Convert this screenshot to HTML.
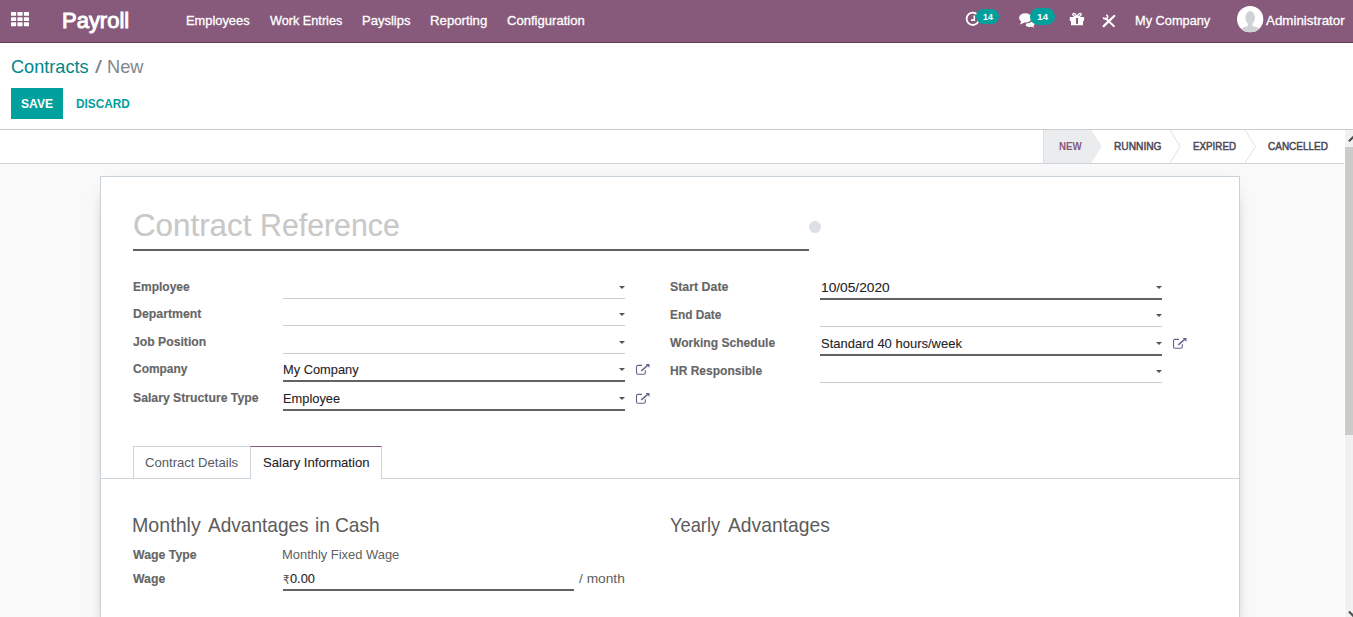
<!DOCTYPE html>
<html lang="en">
<head>
<meta charset="utf-8">
<title>Odoo - Contracts / New</title>
<style>
html,body{margin:0;padding:0;}
body{width:1353px;height:617px;overflow:hidden;position:relative;background:#f9f9f9;
font-family:"Liberation Sans",sans-serif;-webkit-font-smoothing:antialiased;}
.t{position:absolute;white-space:pre;transform-origin:0 0;display:block;}
.r{position:absolute;}
svg{position:absolute;overflow:visible;}
nav,header,main,section,.w{display:block;margin:0;padding:0;}
</style>
</head>
<body>
<nav class="o_main_navbar">
<div class="r" style="left:0px;top:0px;width:1353px;height:42px;background:#875A7B;"></div>
<div class="r" style="left:0px;top:42px;width:1353px;height:1px;background:#5f3f56;"></div>
<svg style="left:11px;top:12px" width="18" height="14" viewBox="0 0 18 14" fill="#fff"><rect x="0.00" y="0.00" width="5.14" height="3.86" rx="0.6"/><rect x="6.43" y="0.00" width="5.14" height="3.86" rx="0.6"/><rect x="12.86" y="0.00" width="5.14" height="3.86" rx="0.6"/><rect x="0.00" y="5.14" width="5.14" height="3.86" rx="0.6"/><rect x="6.43" y="5.14" width="5.14" height="3.86" rx="0.6"/><rect x="12.86" y="5.14" width="5.14" height="3.86" rx="0.6"/><rect x="0.00" y="10.28" width="5.14" height="3.86" rx="0.6"/><rect x="6.43" y="10.28" width="5.14" height="3.86" rx="0.6"/><rect x="12.86" y="10.28" width="5.14" height="3.86" rx="0.6"/></svg>
<span class="t" style="left:62px;top:5px;font-size:22.70px;line-height:30px;font-weight:400;color:#fff;transform:scaleX(0.9687);-webkit-text-stroke:1px #fff;">Payroll</span>
<span class="t" style="left:186px;top:12px;font-size:13.40px;line-height:17px;font-weight:400;color:#fff;transform:scaleX(0.9594);-webkit-text-stroke:0.3px #fff;">Employees</span>
<span class="t" style="left:270px;top:12px;font-size:13.40px;line-height:17px;font-weight:400;color:#fff;transform:scaleX(0.9467);-webkit-text-stroke:0.3px #fff;">Work Entries</span>
<span class="t" style="left:362px;top:12px;font-size:13.40px;line-height:17px;font-weight:400;color:#fff;transform:scaleX(0.9707);-webkit-text-stroke:0.3px #fff;">Payslips</span>
<span class="t" style="left:430px;top:12px;font-size:13.40px;line-height:17px;font-weight:400;color:#fff;transform:scaleX(0.9868);-webkit-text-stroke:0.3px #fff;">Reporting</span>
<span class="t" style="left:507px;top:12px;font-size:13.40px;line-height:17px;font-weight:400;color:#fff;transform:scaleX(0.9761);-webkit-text-stroke:0.3px #fff;">Configuration</span>
<span class="t" style="left:1135px;top:12px;font-size:13.40px;line-height:17px;font-weight:400;color:#fff;transform:scaleX(0.9541);-webkit-text-stroke:0.3px #fff;">My Company</span>
<span class="t" style="left:1266px;top:12px;font-size:13.40px;line-height:17px;font-weight:400;color:#fff;transform:scaleX(0.9971);-webkit-text-stroke:0.3px #fff;">Administrator</span>
<svg style="left:965px;top:11px" width="16" height="16" viewBox="965 11 16 16"><circle cx="972.8" cy="18.8" r="6.2" fill="none" stroke="#fff" stroke-width="1.9"/><path d="M974.3 15.4v4.7H971" fill="none" stroke="#fff" stroke-width="1.6"/></svg>
<div class="r" style="left:975.9px;top:8.8px;width:23.1px;height:15.3px;background:#00A09D;border-radius:7.7px"></div>
<span class="t" style="left:983px;top:10px;font-size:9.80px;line-height:13px;font-weight:700;color:#fff;transform:scaleX(0.9009);">14</span>
<svg style="left:1018px;top:12px" width="18" height="15" viewBox="1018 12 18 15" fill="#fff"><ellipse cx="1025.3" cy="17.9" rx="6.2" ry="4.7"/><path d="M1021.6 20.6L1020 24.4L1024.6 22.4z"/><path d="M1026.2 23.4c2.6 0 5-.9 6.300-2.500c1.400.8 2.100 1.800 2.100 2.900c0 .9-.5 1.700-1.300 2.300l1 1.300l-3.200-.6c-2.300.3-4.200-.2-5.300-1.400z"/></svg>
<div class="r" style="left:1030.2px;top:8.1px;width:24.9px;height:17px;background:#00A09D;border-radius:8.5px"></div>
<span class="t" style="left:1037px;top:10px;font-size:9.80px;line-height:13px;font-weight:700;color:#fff;transform:scaleX(1.0204);">14</span>
<svg style="left:1069px;top:12px" width="16" height="14" viewBox="1069 12 16 14" fill="#fff"><rect x="1069.8" y="16.9" width="14.3" height="4.1" rx="0.5"/><rect x="1071" y="20.5" width="12" height="4.7" rx="0.5"/><rect x="1076" y="17.3" width="2" height="6.6" fill="#875A7B"/><path d="M1077 17.2c-1.200-2.800-2.600-4.300-3.700-3.700c-1.100.6-.3 3.300 3.700 3.700zM1077 17.2c1.200-2.800 2.600-4.300 3.700-3.700c1.100.6.3 3.300-3.700 3.700z" fill="none" stroke="#fff" stroke-width="1.3"/></svg>
<svg style="left:1102px;top:14px" width="14" height="14" viewBox="1102 14 14 14" fill="none" stroke="#fff"><path d="M1103.7 26.1L1114.2 16" stroke-width="2.3" stroke-linecap="round"/><path d="M1105.6 18.2L1113.9 26.100" stroke-width="2" stroke-linecap="round"/><path d="M1103.300 17.200A2.200 2.200 0 1 0 1106.100 14.900" stroke-width="1.500"/></svg>
<svg style="left:1236.8px;top:5.9px" width="26.3" height="26.3" viewBox="0 0 26 26"><defs><clipPath id="av"><circle cx="13" cy="13" r="13"/></clipPath></defs><circle cx="13" cy="13" r="13" fill="#fff"/><g clip-path="url(#av)" fill="#d0d3d6"><ellipse cx="13" cy="11.5" rx="4.8" ry="6.6"/><path d="M10.6 16h4.8v4h-4.8z"/><path d="M2 27c0-5 5-6.6 11-7.4 6 .8 11 2.400 11 7.400z"/></g></svg>
</nav>
<header class="o_control_panel">
<div class="r" style="left:0px;top:43px;width:1353px;height:86px;background:#fff;"></div>
<div class="r" style="left:0px;top:129px;width:1353px;height:1px;background:#cccccc;"></div>
<span class="t" style="left:11px;top:55px;font-size:18.60px;line-height:24px;font-weight:400;color:#00878A;transform:scaleX(0.9751);">Contracts</span>
<span class="t" style="left:95px;top:55px;font-size:18.60px;line-height:24px;font-weight:400;color:#7a828a;transform:scaleX(1.3441);">/</span>
<span class="t" style="left:107px;top:55px;font-size:18.60px;line-height:24px;font-weight:400;color:#7f868c;transform:scaleX(0.9801);">New</span>
<div class="r" style="left:11px;top:88px;width:52px;height:31px;background:#00A09D;"></div>
<span class="t" style="left:21px;top:95px;font-size:13.00px;line-height:17px;font-weight:700;color:#fff;transform:scaleX(0.9296);">SAVE</span>
<span class="t" style="left:76px;top:95px;font-size:13.00px;line-height:17px;font-weight:700;color:#00A09D;transform:scaleX(0.9081);">DISCARD</span>
</header>
<div class="o_form_statusbar">
<div class="r" style="left:0px;top:130px;width:1345px;height:33px;background:#fff;"></div>
<div class="r" style="left:0px;top:163px;width:1344px;height:1px;background:#ced4da;"></div>
<svg style="left:1043px;top:130px" width="302" height="33" viewBox="0 0 302 33"><polygon points="0,0 48.3,0 58.8,16.500 48.3,33 0,33" fill="#eaecee"/><rect x="0" y="0" width="1" height="33" fill="#dcdfe2"/><polyline points="127,0 137,16.5 127,33" fill="none" stroke="#dee2e6" stroke-width="1"/><polyline points="202,0 212.5,16.5 202,33" fill="none" stroke="#dee2e6" stroke-width="1"/></svg>
<span class="t" style="left:1059px;top:139px;font-size:11.50px;line-height:15px;font-weight:700;color:#875A7B;transform:scaleX(0.8500);">NEW</span>
<span class="t" style="left:1114px;top:139px;font-size:11.50px;line-height:15px;font-weight:400;color:#4c4753;transform:scaleX(0.8854);-webkit-text-stroke:0.5px #4c4753;">RUNNING</span>
<span class="t" style="left:1193px;top:139px;font-size:11.50px;line-height:15px;font-weight:400;color:#4c4753;transform:scaleX(0.8517);-webkit-text-stroke:0.5px #4c4753;">EXPIRED</span>
<span class="t" style="left:1268px;top:139px;font-size:11.50px;line-height:15px;font-weight:400;color:#4c4753;transform:scaleX(0.8692);-webkit-text-stroke:0.5px #4c4753;">CANCELLED</span>
</div>
<div class="scrollbar">
<div class="r" style="left:1345px;top:130px;width:8px;height:487px;background:#f1f1f1;"></div>
<div class="r" style="left:1345px;top:147px;width:8px;height:288px;background:#cbcbc9;"></div>
<svg style="left:1345px;top:130px" width="8" height="17" viewBox="1345 130 8 17"><path d="M1348.9 141.300L1354 136.200" stroke="#505050" stroke-width="2.200" fill="none"/></svg>
<svg style="left:1345px;top:600px" width="8" height="17" viewBox="1345 600 8 17"><path d="M1348.9 611.500L1354 616.600" stroke="#505050" stroke-width="2.200" fill="none"/></svg>
<div class="r" style="left:1344px;top:163px;width:1px;height:454px;background:#fff;"></div>
</div>
<main class="o_form_sheet">
<div class="r" style="left:100px;top:176px;width:1138px;height:460px;background:#fff;border:1px solid #c9d1d9;box-shadow:0 5px 20px -15px #000"></div>
<div class="w"><span class="t" style="left:133px;top:205px;font-size:30.50px;line-height:40px;font-weight:400;color:#c8c8c8;transform:scaleX(1.0268);-webkit-text-stroke:0.15px #c8c8c8;">Contract </span><span class="t" style="left:260px;top:205px;font-size:30.50px;line-height:40px;font-weight:400;color:#c8c8c8;transform:scaleX(0.9936);-webkit-text-stroke:0.15px #c8c8c8;">Reference</span></div>
<div class="r" style="left:133px;top:249px;width:676px;height:2px;background:#606060;"></div>
<div class="r" style="left:809.3px;top:221.3px;width:11.6px;height:11.6px;border-radius:50%;background:#dcdfe3"></div>
<span class="t" style="left:133px;top:278px;font-size:13.40px;line-height:17px;font-weight:700;color:#666666;transform:scaleX(0.8951);-webkit-text-stroke:0.15px #666;">Employee</span>
<div class="r" style="left:283px;top:298px;width:342px;height:1px;background:#cccccc;"></div>
<svg style="left:619.2px;top:286.3px" width="6" height="3" viewBox="0 0 6 3"><path d="M0 0h6L3 3z" fill="#555"/></svg>
<span class="t" style="left:133px;top:305px;font-size:13.40px;line-height:17px;font-weight:700;color:#666666;transform:scaleX(0.9202);-webkit-text-stroke:0.15px #666;">Department</span>
<div class="r" style="left:283px;top:325px;width:342px;height:1px;background:#cccccc;"></div>
<svg style="left:619.2px;top:313.2px" width="6" height="3" viewBox="0 0 6 3"><path d="M0 0h6L3 3z" fill="#555"/></svg>
<span class="t" style="left:133px;top:333px;font-size:13.40px;line-height:17px;font-weight:700;color:#666666;transform:scaleX(0.9114);-webkit-text-stroke:0.15px #666;">Job Position</span>
<div class="r" style="left:283px;top:353px;width:342px;height:1px;background:#cccccc;"></div>
<svg style="left:619.2px;top:341.3px" width="6" height="3" viewBox="0 0 6 3"><path d="M0 0h6L3 3z" fill="#555"/></svg>
<span class="t" style="left:133px;top:360px;font-size:13.40px;line-height:17px;font-weight:700;color:#666666;transform:scaleX(0.8929);-webkit-text-stroke:0.15px #666;">Company</span>
<div class="r" style="left:283px;top:380px;width:342px;height:2px;background:#626262;"></div>
<svg style="left:619.2px;top:368.3px" width="6" height="3" viewBox="0 0 6 3"><path d="M0 0h6L3 3z" fill="#555"/></svg>
<span class="t" style="left:283px;top:361px;font-size:13.40px;line-height:17px;font-weight:400;color:#1f2327;transform:scaleX(0.9591);-webkit-text-stroke:0.1px #1f2327;">My Company</span>
<svg style="left:635.6px;top:363.8px" width="14" height="11" viewBox="0 0 14 11" fill="none" stroke="#5f6488"><path d="M9.300 6.300v2.500a1.400 1.400 0 0 1-1.400 1.400H1.900A1.400 1.400 0 0 1 .5 8.800V2.800a1.400 1.400 0 0 1 1.400-1.400h4.100" stroke-width="1.100"/><path d="M5.300 6.900L11.800 1.200" stroke-width="1.500"/><path d="M9.600 0h3.900v3.700z" fill="#5f6488" stroke="none"/></svg>
<span class="t" style="left:133px;top:389px;font-size:13.40px;line-height:17px;font-weight:700;color:#666666;transform:scaleX(0.9131);-webkit-text-stroke:0.15px #666;">Salary Structure Type</span>
<div class="r" style="left:283px;top:409px;width:342px;height:2px;background:#626262;"></div>
<svg style="left:619.2px;top:397.4px" width="6" height="3" viewBox="0 0 6 3"><path d="M0 0h6L3 3z" fill="#555"/></svg>
<span class="t" style="left:283px;top:390px;font-size:13.40px;line-height:17px;font-weight:400;color:#1f2327;transform:scaleX(0.9591);-webkit-text-stroke:0.1px #1f2327;">Employee</span>
<svg style="left:635.6px;top:392.9px" width="14" height="11" viewBox="0 0 14 11" fill="none" stroke="#5f6488"><path d="M9.300 6.300v2.500a1.400 1.400 0 0 1-1.400 1.400H1.900A1.400 1.400 0 0 1 .5 8.800V2.800a1.400 1.400 0 0 1 1.400-1.400h4.100" stroke-width="1.100"/><path d="M5.300 6.900L11.800 1.200" stroke-width="1.500"/><path d="M9.600 0h3.900v3.700z" fill="#5f6488" stroke="none"/></svg>
<span class="t" style="left:670px;top:278px;font-size:13.40px;line-height:17px;font-weight:700;color:#666666;transform:scaleX(0.9228);-webkit-text-stroke:0.15px #666;">Start Date</span>
<div class="r" style="left:820px;top:298px;width:342px;height:2px;background:#626262;"></div>
<svg style="left:1156.2px;top:286.3px" width="6" height="3" viewBox="0 0 6 3"><path d="M0 0h6L3 3z" fill="#555"/></svg>
<span class="t" style="left:821px;top:279px;font-size:13.40px;line-height:17px;font-weight:400;color:#1f2327;transform:scaleX(1.0243);-webkit-text-stroke:0.1px #1f2327;">10/05/2020</span>
<span class="t" style="left:670px;top:306px;font-size:13.40px;line-height:17px;font-weight:700;color:#666666;transform:scaleX(0.8853);-webkit-text-stroke:0.15px #666;">End Date</span>
<div class="r" style="left:820px;top:326px;width:342px;height:1px;background:#cccccc;"></div>
<svg style="left:1156.2px;top:314.3px" width="6" height="3" viewBox="0 0 6 3"><path d="M0 0h6L3 3z" fill="#555"/></svg>
<span class="t" style="left:670px;top:334px;font-size:13.40px;line-height:17px;font-weight:700;color:#666666;transform:scaleX(0.9017);-webkit-text-stroke:0.15px #666;">Working Schedule</span>
<div class="r" style="left:820px;top:354px;width:342px;height:2px;background:#626262;"></div>
<svg style="left:1156.2px;top:342.2px" width="6" height="3" viewBox="0 0 6 3"><path d="M0 0h6L3 3z" fill="#555"/></svg>
<span class="t" style="left:821px;top:335px;font-size:13.40px;line-height:17px;font-weight:400;color:#1f2327;transform:scaleX(0.9709);-webkit-text-stroke:0.1px #1f2327;">Standard 40 hours/week</span>
<svg style="left:1172.6px;top:337.7px" width="14" height="11" viewBox="0 0 14 11" fill="none" stroke="#5f6488"><path d="M9.300 6.300v2.500a1.400 1.400 0 0 1-1.400 1.400H1.900A1.400 1.400 0 0 1 .5 8.800V2.800a1.400 1.400 0 0 1 1.400-1.400h4.100" stroke-width="1.100"/><path d="M5.300 6.900L11.800 1.200" stroke-width="1.500"/><path d="M9.600 0h3.900v3.700z" fill="#5f6488" stroke="none"/></svg>
<span class="t" style="left:670px;top:362px;font-size:13.40px;line-height:17px;font-weight:700;color:#666666;transform:scaleX(0.8968);-webkit-text-stroke:0.15px #666;">HR Responsible</span>
<div class="r" style="left:820px;top:382px;width:342px;height:1px;background:#cccccc;"></div>
<svg style="left:1156.2px;top:370.2px" width="6" height="3" viewBox="0 0 6 3"><path d="M0 0h6L3 3z" fill="#555"/></svg>
<section class="o_notebook">
<div class="r" style="left:101px;top:478px;width:1138px;height:1px;background:#cdd3da;"></div>
<div class="r" style="left:133px;top:446px;width:117px;height:31px;border:1px solid #cdd3da;border-bottom:none;background:#fff;box-sizing:content-box"></div>
<div class="r" style="left:250px;top:446px;width:130px;height:32px;border:1px solid #cdd3da;border-top-color:#875A7B;border-bottom:none;background:#fff;box-sizing:content-box"></div>
<span class="t" style="left:145px;top:454px;font-size:13.40px;line-height:17px;font-weight:400;color:#555b62;transform:scaleX(0.9775);">Contract Details</span>
<span class="t" style="left:263px;top:454px;font-size:13.40px;line-height:17px;font-weight:400;color:#1f2327;transform:scaleX(0.9805);-webkit-text-stroke:0.1px #1f2327;">Salary Information</span>
<div class="w"><span class="t" style="left:132px;top:512px;font-size:20.20px;line-height:26px;font-weight:400;color:#5c5c5c;transform:scaleX(0.9731);">Monthly </span><span class="t" style="left:208px;top:512px;font-size:20.20px;line-height:26px;font-weight:400;color:#5c5c5c;transform:scaleX(0.9439);">Advantages </span><span class="t" style="left:315px;top:512px;font-size:20.20px;line-height:26px;font-weight:400;color:#5c5c5c;transform:scaleX(0.9504);">in </span><span class="t" style="left:335px;top:512px;font-size:20.20px;line-height:26px;font-weight:400;color:#5c5c5c;transform:scaleX(0.9498);">Cash</span></div>
<div class="w"><span class="t" style="left:670px;top:512px;font-size:20.20px;line-height:26px;font-weight:400;color:#5c5c5c;transform:scaleX(0.9062);">Yearly </span><span class="t" style="left:728px;top:512px;font-size:20.20px;line-height:26px;font-weight:400;color:#5c5c5c;transform:scaleX(0.9547);">Advantages</span></div>
<span class="t" style="left:133px;top:546px;font-size:13.40px;line-height:17px;font-weight:700;color:#666666;transform:scaleX(0.9195);-webkit-text-stroke:0.15px #666;">Wage Type</span>
<span class="t" style="left:282px;top:546px;font-size:13.40px;line-height:17px;font-weight:400;color:#606060;transform:scaleX(0.9649);">Monthly Fixed Wage</span>
<span class="t" style="left:133px;top:570px;font-size:13.40px;line-height:17px;font-weight:700;color:#666666;transform:scaleX(0.9158);-webkit-text-stroke:0.15px #666;">Wage</span>
<span class="t" style="left:283px;top:573px;font-size:12.5px;line-height:14px;color:#555;font-family:'DejaVu Sans',sans-serif;transform:scaleX(.82)">₹</span>
<span class="t" style="left:290px;top:570px;font-size:13.40px;line-height:17px;font-weight:400;color:#1f2327;transform:scaleX(0.9554);-webkit-text-stroke:0.1px #1f2327;">0.00</span>
<div class="r" style="left:283px;top:589px;width:291px;height:2px;background:#626262;"></div>
<span class="t" style="left:579px;top:570px;font-size:13.40px;line-height:17px;font-weight:400;color:#606060;transform:scaleX(1.0260);">/ month</span>
</section>
</main>
</body>
</html>
